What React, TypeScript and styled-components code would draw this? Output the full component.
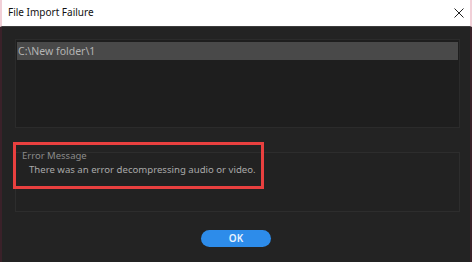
import React from 'react';
import styled, {createGlobalStyle} from 'styled-components';

const GlobalStyle = createGlobalStyle`
    html, body {
        margin: 0;
        padding: 0;
        width: 474px;
        height: 262px;
        overflow: hidden;
        background: #ffffff;
    }
    #root {
        width: 474px;
        height: 262px;
    }
`;

const Window = styled.div`
    display: flex;
    flex-direction: column;
    width: 472px;
    height: 262px;
    font-family: "Noto Sans", "Open Sans", sans-serif;
`;

const TitleBar = styled.div`
    display: flex;
    align-items: center;
    justify-content: space-between;
    height: 27px;
    padding: 0 6px 0 6px;
    background: #ffffff;
    border-left: 2px solid #f1cfd7;
    border-right: 2px solid #f1cfd7;
    border-bottom: 1px solid #3c3c3c;
    box-sizing: border-box;
    flex-shrink: 0;
`;

const Title = styled.div`
    font-size: 10px;
    color: #111111;
    padding-bottom: 2px;
`;

const CloseButton = styled.button`
    display: flex;
    align-items: center;
    justify-content: center;
    width: 10px;
    height: 10px;
    margin-bottom: 1px;
    padding: 0;
    border: none;
    background: none;
    color: #222222;
`;

const Body = styled.div`
    position: relative;
    flex: 1;
    display: flex;
    flex-direction: column;
    padding: 12px 10px 0 13px;
    background: #232323;
    border-left: 2px solid #3a2129;
    border-right: 2px solid #3a2129;
`;

const FileList = styled.div`
    height: 89px;
    box-sizing: border-box;
    padding: 2px 1px;
    background: #1e1e1e;
    border: 1px solid #2b2b2b;
`;

const FileRow = styled.div<{selected?: boolean}>`
    height: 18px;
    line-height: 18px;
    padding-left: 1px;
    font-size: 10.5px;
    color: #b4b4b4;
    background: ${(p) => (p.selected ? '#494949' : 'transparent')};
`;

const ErrorGroup = styled.div`
    margin-top: 24px;
    height: 60px;
    box-sizing: border-box;
    padding: 0 6px;
    border: 1px solid #2d2d2d;
    background: #222222;
`;

const ErrorLabel = styled.div`
    margin-top: -3px;
    font-size: 9.5px;
    line-height: 12px;
    color: #8b8b8b;
`;

const ErrorText = styled.div`
    margin: 1px 0 0 7px;
    font-size: 9.6px;
    line-height: 13px;
    color: #a9a9a9;
`;

const Highlight = styled.div`
    position: absolute;
    left: 11px;
    top: 115px;
    width: 251px;
    height: 47px;
    box-sizing: border-box;
    border: 3px solid #e9403f;
    pointer-events: none;
`;

const Footer = styled.div`
    display: flex;
    justify-content: center;
    padding: 18px 0 0;
    margin-left: -3px;
`;

const OkButton = styled.button`
    width: 70px;
    height: 17px;
    padding: 0;
    border: none;
    border-radius: 9px;
    background: #2d8cea;
    color: #e8f2ff;
    font-family: "Noto Sans", "Open Sans", sans-serif;
    font-size: 10px;
    font-weight: 600;
    line-height: 17px;
`;

const App = (): JSX.Element => {
    return (
        <>
            <GlobalStyle/>
            <Window>
                <TitleBar>
                    <Title>{'File Import Failure'}</Title>
                    <CloseButton aria-label='Close'>
                        <svg
                            width='10'
                            height='10'
                            viewBox='0 0 10 10'
                        >
                            <path
                                d='M0.5 0.5 L9.5 9.5 M9.5 0.5 L0.5 9.5'
                                stroke='currentColor'
                                strokeWidth='1'
                                fill='none'
                            />
                        </svg>
                    </CloseButton>
                </TitleBar>
                <Body>
                    <FileList>
                        <FileRow selected={true}>{'C:\\New folder\\1'}</FileRow>
                    </FileList>
                    <ErrorGroup>
                        <ErrorLabel>{'Error Message'}</ErrorLabel>
                        <ErrorText>{'There was an error decompressing audio or video.'}</ErrorText>
                    </ErrorGroup>
                    <Footer>
                        <OkButton>{'OK'}</OkButton>
                    </Footer>
                    <Highlight/>
                </Body>
            </Window>
        </>
    );
};

export default App;
